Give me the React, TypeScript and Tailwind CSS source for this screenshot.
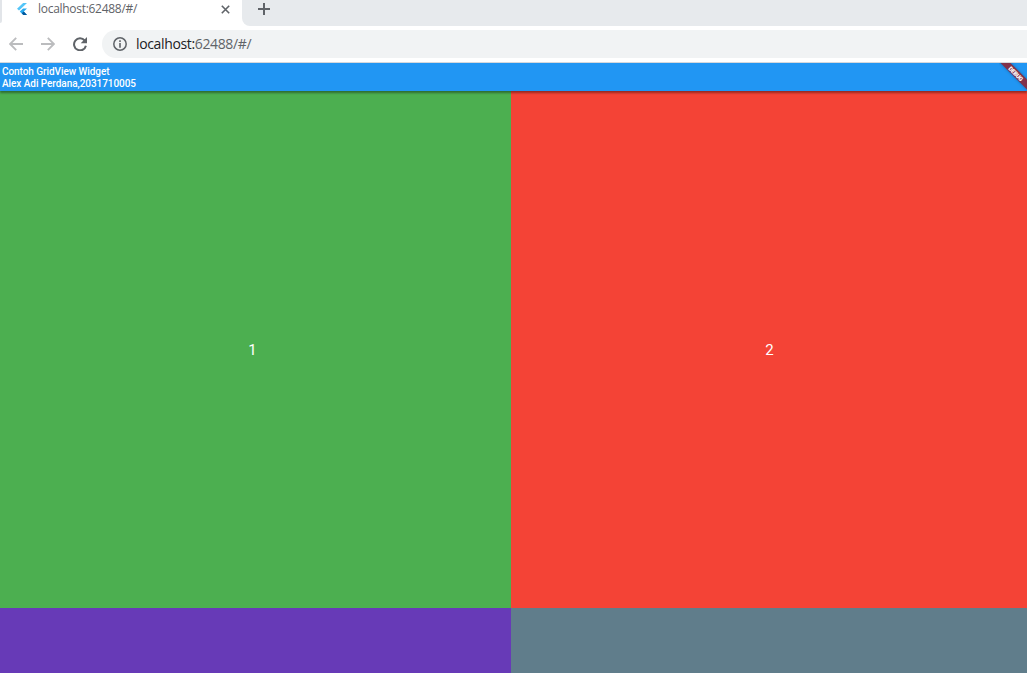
function FlutterLogo() {
  return (
    <svg className="block h-[12px] w-[10px] shrink-0" viewBox="0 0 10 12">
      <path d="M6.1 0H10L2 7.6 0 5.8Z" fill="#54c5f8" />
      <path d="M6.1 5.4H10L6.8 8.6 10 12H6.2L2.8 8.6Z" fill="#29a9ee" />
      <path d="M4.8 10.3 6.8 8.5 10 12H6.4Z" fill="#01579b" />
    </svg>
  );
}

function TabStrip() {
  return (
    <div className="flex h-[26px] shrink-0 bg-[#e7eaed]">
      <div className="w-[2px] bg-white">
        <div className="h-[23px] rounded-br-[2px] bg-[#e2e5e9]" />
      </div>
      <div className="flex w-[240px] bg-white pl-[15px]">
        <div className="pt-[3px]"><FlutterLogo /></div>
        <span className="ml-[11px] mt-[1px] w-[183px] whitespace-nowrap font-['Open_Sans',sans-serif] text-[12px] leading-[16px] tracking-[-0.29px] text-[#5f6368]">
          localhost:62488/#/
        </span>
        <svg className="mt-[5px] block h-[9px] w-[9px] shrink-0" viewBox="0 0 9 9">
          <path d="M.8.8 8.2 8.2M8.2.8.8 8.2" stroke="#5f6368" strokeWidth="1.6" />
        </svg>
      </div>
      <div className="flex-1 bg-white">
        <div className="h-[26px] rounded-bl-[8px] bg-[#e7eaed] pl-[16px] pt-[3px]">
          <svg className="block h-[12px] w-[12px]" viewBox="0 0 12 12">
            <path d="M6 0V12M0 6H12" stroke="#5f6368" strokeWidth="2" />
          </svg>
        </div>
      </div>
    </div>
  );
}

function Toolbar() {
  return (
    <div className="flex h-[37px] shrink-0 border-b border-[#d5d8dc] bg-white pt-[4px]">
      <div className="flex h-[28px] w-[102px] items-center pl-[9px]">
        <svg className="block h-[14px] w-[14px]" viewBox="0 0 14 14" fill="none" stroke="#bbbcbe" strokeWidth="1.8">
          <path d="M14 7H1.4M7.2.8 1.1 7 7.2 13.2" />
        </svg>
        <svg className="ml-[18px] block h-[14px] w-[14px]" viewBox="0 0 14 14" fill="none" stroke="#bbbcbe" strokeWidth="1.8">
          <path d="M0 7H12.6M6.8.8 12.9 7 6.8 13.2" />
        </svg>
        <svg className="ml-[18px] block h-[14px] w-[14px]" viewBox="0 0 14 14">
          <path d="M11.7 3.5A6 6 0 1 0 12.9 8.7" fill="none" stroke="#5f6368" strokeWidth="2" />
          <path d="M14 0V6.3H7.7Z" fill="#5f6368" />
        </svg>
      </div>
      <div className="flex h-[28px] flex-1 items-center rounded-l-full bg-[#f1f3f4] pl-[11px]">
        <svg className="block h-[14px] w-[14px]" viewBox="0 0 14 14">
          <circle cx="7" cy="7" r="6.2" fill="none" stroke="#5f6368" strokeWidth="1.5" />
          <path d="M6.2 3.3H7.8V4.9H6.2ZM6.2 6H7.8V10.7H6.2Z" fill="#5f6368" />
        </svg>
        <span className="ml-[9px] whitespace-nowrap font-['Open_Sans',sans-serif] text-[14px] leading-[20px] tracking-[-0.36px] text-[#5f6368]">
          <span className="text-[#202124]">localhost:</span>62488/#/
        </span>
      </div>
    </div>
  );
}

function DebugBanner() {
  return (
    <div className="absolute right-0 top-0 h-[28px] w-[28px] overflow-hidden">
      <div className="absolute left-[-13px] top-[7px] flex h-[7px] w-[60px] rotate-45 items-center justify-center bg-[#81324b] font-['Roboto',sans-serif] text-[6px] font-black leading-[7px] tracking-[-0.35px] text-white shadow-[0_0_3px_#00000050]">
        DEBUG
      </div>
    </div>
  );
}

export default function App() {
  return (
    <div className="flex h-[673px] w-[1027px] flex-col overflow-hidden bg-white font-['Roboto',sans-serif]">
      <TabStrip />
      <Toolbar />
      <header className="relative z-10 h-[28px] shrink-0 bg-[#2196f3] pl-[2px] pt-[3px] text-[10px] font-medium leading-[12px] tracking-[-0.06px] text-white shadow-[0_2px_2px_#00000060]">
        <div className="whitespace-nowrap">Contoh GridView Widget</div>
        <div className="whitespace-nowrap">Alex Adi Perdana,2031710005</div>
        <DebugBanner />
      </header>
      <main className="grid flex-1 grid-cols-[511px_516px] grid-rows-[517px_65px] text-[15px] leading-[20px] text-white">
        <div className="flex items-center justify-center bg-[#4caf50] pr-[6px] pt-[1px]">1</div>
        <div className="flex items-center justify-center bg-[#f44336] pl-[1px] pt-[1px]">2</div>
        <div className="bg-[#673ab7]" />
        <div className="bg-[#607d8b]" />
      </main>
    </div>
  );
}
